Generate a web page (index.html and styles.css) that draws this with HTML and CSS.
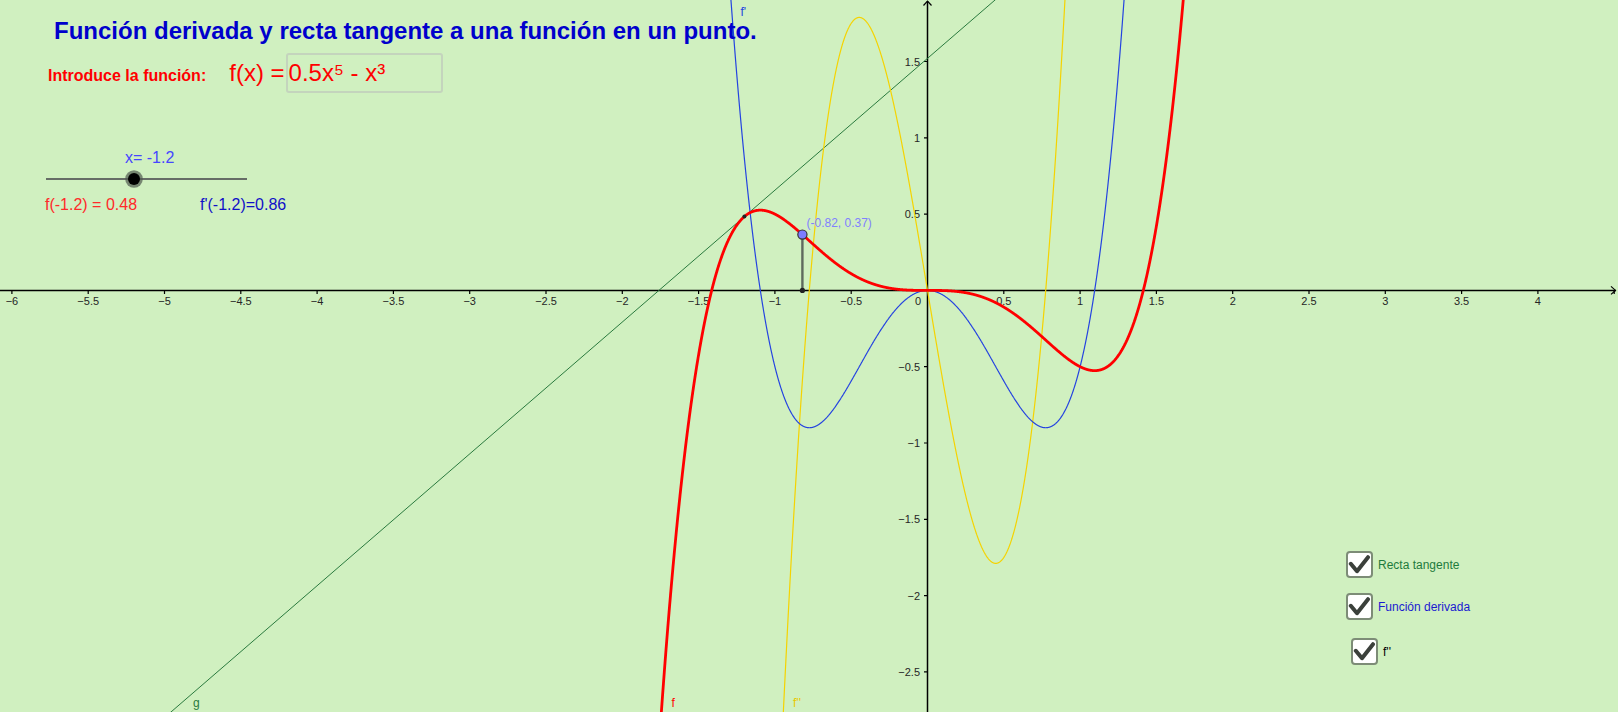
FILE: index.html
```html
<!DOCTYPE html>
<html lang="es">
<head>
<meta charset="utf-8">
<title>Función derivada y recta tangente</title>
<link rel="stylesheet" href="styles.css">
</head>
<body>
<div class="applet">
  <svg class="graph" width="1618" height="712" viewBox="0 0 1618 712">
    <g class="axes">
      <line class="axis" x1="0" y1="290.4" x2="1616" y2="290.4"/>
      <polyline class="arrow" points="1611,286.4 1615.5,290.4 1611,294.4"/>
      <line class="axis" x1="927.5" y1="712" x2="927.5" y2="1"/>
      <polyline class="arrow" points="923.5,5.5 927.5,1.2 931.5,5.5"/>
      <g transform="translate(927.5 290.4)">
        <path class="tick" d="M-915.6 0v3.5M-839.3 0v3.5M-763 0v3.5M-686.7 0v3.5M-610.4 0v3.5M-534.1 0v3.5M-457.8 0v3.5M-381.5 0v3.5M-305.2 0v3.5M-228.9 0v3.5M-152.6 0v3.5M-76.3 0v3.5M76.3 0v3.5M152.6 0v3.5M228.9 0v3.5M305.2 0v3.5M381.5 0v3.5M457.8 0v3.5M534.1 0v3.5M610.4 0v3.5M686.7 0v3.5"/>
        <path class="tick" d="M0 -228.9h-3.5M0 -152.6h-3.5M0 -76.3h-3.5M0 76.3h-3.5M0 152.6h-3.5M0 228.9h-3.5M0 305.2h-3.5M0 381.5h-3.5"/>
        <g class="xlab">
          <text x="-915.6" y="14.6">−6</text>
          <text x="-839.3" y="14.6">−5.5</text>
          <text x="-763" y="14.6">−5</text>
          <text x="-686.7" y="14.6">−4.5</text>
          <text x="-610.4" y="14.6">−4</text>
          <text x="-534.1" y="14.6">−3.5</text>
          <text x="-457.8" y="14.6">−3</text>
          <text x="-381.5" y="14.6">−2.5</text>
          <text x="-305.2" y="14.6">−2</text>
          <text x="-228.9" y="14.6">−1.5</text>
          <text x="-152.6" y="14.6">−1</text>
          <text x="-76.3" y="14.6">−0.5</text>
          <text x="76.3" y="14.6">0.5</text>
          <text x="152.6" y="14.6">1</text>
          <text x="228.9" y="14.6">1.5</text>
          <text x="305.2" y="14.6">2</text>
          <text x="381.5" y="14.6">2.5</text>
          <text x="457.8" y="14.6">3</text>
          <text x="534.1" y="14.6">3.5</text>
          <text x="610.4" y="14.6">4</text>
        </g>
        <g class="ylab">
          <text x="-6.5" y="14.6">0</text>
          <text x="-7.5" y="-224.9">1.5</text>
          <text x="-7.5" y="-148.6">1</text>
          <text x="-7.5" y="-72.3">0.5</text>
          <text x="-7.5" y="80.3">−0.5</text>
          <text x="-7.5" y="156.6">−1</text>
          <text x="-7.5" y="232.9">−1.5</text>
          <text x="-7.5" y="309.2">−2</text>
          <text x="-7.5" y="385.5">−2.5</text>
        </g>
      </g>
    </g>
    <path id="curve-g" class="curve curve-g" d=""/>
    <path id="curve-d2" class="curve curve-d2" d=""/>
    <path id="curve-d1" class="curve curve-d1" d=""/>
    <path id="curve-f" class="curve curve-f" d=""/>
    <line class="drop" x1="802.4" y1="234.6" x2="802.4" y2="290.4"/>
    <circle class="foot" cx="802.4" cy="290.4" r="2.6"/>
    <circle class="tpoint" cx="744.4" cy="216.6" r="2"/>
    <circle class="apoint" cx="802.4" cy="234.6" r="4.6"/>
    <text class="plabel" x="806.5" y="226.5">(-0.82, 0.37)</text>
    <text class="clabel clabel-d1" x="740.5" y="15.5">f'</text>
    <text class="clabel clabel-g" x="193" y="706.5">g</text>
    <text class="clabel clabel-f" x="671.5" y="706.5">f</text>
    <text class="clabel clabel-d2" x="793" y="706.5">f''</text>
  </svg>

  <header class="head">
    <h1 class="title">Función derivada y recta tangente a una función en un punto.</h1>
    <div class="input-row">
      <span class="prompt">Introduce la función:</span>
      <span class="fx">f(x) =</span>
      <span class="fbox">0.5x⁵ - x³</span>
    </div>
  </header>

  <section class="slider-panel">
    <div class="slider-label">x= -1.2</div>
    <div class="slider">
      <span class="track"></span>
      <span class="knob"></span>
    </div>
    <div class="values">
      <span class="fval">f(-1.2) = 0.48</span>
      <span class="dval">f'(-1.2)=0.86</span>
    </div>
  </section>

  <ul class="checks">
    <li class="check">
      <span class="box"><svg width="23" height="23" viewBox="0 0 23 23"><path d="M2.8 10.8 L9 18.2 L20 4.2"/></svg></span>
      <span class="check-label label-green">Recta tangente</span>
    </li>
    <li class="check">
      <span class="box"><svg width="23" height="23" viewBox="0 0 23 23"><path d="M2.8 10.8 L9 18.2 L20 4.2"/></svg></span>
      <span class="check-label label-blue">Función derivada</span>
    </li>
    <li class="check check-third">
      <span class="box"><svg width="23" height="23" viewBox="0 0 23 23"><path d="M2.8 10.8 L9 18.2 L20 4.2"/></svg></span>
      <span class="check-label label-black">f''</span>
    </li>
  </ul>
</div>
<script src="script.js"></script>
</body>
</html>
```

FILE: styles.css
```css
* {
  box-sizing: border-box;
  margin: 0;
  padding: 0;
}

html, body {
  width: 1618px;
  height: 712px;
  overflow: hidden;
}

body {
  background: #d0f0c0;
  font-family: "Liberation Sans", Arial, sans-serif;
}

.applet {
  position: relative;
  width: 1618px;
  height: 712px;
}

.graph {
  position: absolute;
  left: 0;
  top: 0;
  display: block;
}

.axis {
  stroke: #000;
  stroke-width: 1.5;
}

.arrow {
  fill: none;
  stroke: #000;
  stroke-width: 1.2;
}

.tick {
  stroke: #000;
  stroke-width: 1.2;
}

.xlab text,
.ylab text {
  font-family: "Liberation Sans", Arial, sans-serif;
  font-size: 11px;
  fill: #262626;
}

.xlab text {
  text-anchor: middle;
}

.ylab text {
  text-anchor: end;
}

.curve {
  fill: none;
  stroke-linejoin: round;
}

.curve-f {
  stroke: #ff0000;
  stroke-width: 2.8;
}

.curve-d1 {
  stroke: #2443e0;
  stroke-width: 1.2;
}

.curve-d2 {
  stroke: #f5d300;
  stroke-width: 1.2;
}

.curve-g {
  stroke: #2a7a3e;
  stroke-width: 1;
}

.drop {
  stroke: #5e6a5e;
  stroke-width: 2.4;
}

.foot {
  fill: #222;
}

.tpoint {
  fill: #222;
}

.apoint {
  fill: #7c7cff;
  stroke: #333;
  stroke-width: 1.2;
}

.plabel {
  font-family: "Liberation Sans", Arial, sans-serif;
  font-size: 12px;
  fill: #8080ff;
}

.clabel {
  font-family: "Liberation Sans", Arial, sans-serif;
  font-size: 12px;
}

.clabel-d1 { fill: #2443e0; }
.clabel-g { fill: #2a7a3e; }
.clabel-f { fill: #ff0000; }
.clabel-d2 { fill: #e8c800; }

/* header */
.head {
  position: absolute;
  left: 48px;
  top: 17px;
  display: flex;
  flex-direction: column;
  gap: 8px;
}

.title {
  font-size: 24px;
  line-height: 28px;
  font-weight: bold;
  color: #0000cc;
  padding-left: 6px;
  white-space: nowrap;
}

.input-row {
  display: flex;
  align-items: baseline;
}

.prompt {
  font-size: 16px;
  font-weight: bold;
  color: #ff0000;
  white-space: nowrap;
}

.fx {
  font-size: 24px;
  color: #ff0000;
  margin-left: 23px;
  margin-right: 1px;
  white-space: nowrap;
}

.fbox {
  width: 157px;
  height: 40px;
  border: 2px solid #c4d4bd;
  border-radius: 3px;
  font-size: 24px;
  line-height: 36px;
  padding-left: 1px;
  color: #ff0000;
  white-space: nowrap;
}

/* slider */
.slider-panel {
  position: absolute;
  left: 44px;
  top: 148px;
  display: flex;
  flex-direction: column;
}

.slider-label {
  font-size: 16px;
  line-height: 20px;
  color: #4646ff;
  padding-left: 81px;
}

.slider {
  position: relative;
  width: 201px;
  height: 16px;
  margin: 3px 0 0 2px;
  display: flex;
  align-items: center;
}

.track {
  display: block;
  width: 100%;
  height: 1.5px;
  background: #666d66;
}

.knob {
  position: absolute;
  left: 82px;
  top: 2px;
  width: 12px;
  height: 12px;
  border-radius: 50%;
  background: #000;
  box-shadow: 0 0 0 2.8px rgba(80, 88, 80, 0.7);
}

.values {
  display: flex;
  margin-top: 8px;
  font-size: 16px;
  line-height: 20px;
}

.fval {
  width: 156px;
  padding-left: 1px;
  color: #ff2a2a;
}

.dval {
  color: #1010c8;
}

/* checkboxes */
.checks {
  position: absolute;
  left: 1346px;
  top: 551px;
  list-style: none;
  display: flex;
  flex-direction: column;
  gap: 15px;
}

.check {
  display: flex;
  align-items: center;
  gap: 5px;
  font-size: 12px;
}

.check-third {
  margin-top: 3px;
  margin-left: 5px;
}

.box {
  width: 27px;
  height: 27px;
  border: 2px solid #7d8c77;
  border-radius: 4px;
  background: #fff;
  display: flex;
  align-items: center;
  justify-content: center;
}

.box svg {
  display: block;
}

.box path {
  fill: none;
  stroke: #3b403b;
  stroke-width: 4;
  stroke-linecap: round;
  stroke-linejoin: round;
}

.label-green { color: #1e7b3c; }
.label-blue { color: #1a1ad0; }
.label-black { color: #000; }
```

FILE: script.js
```js
(function () {
  var OX = 927.5, OY = 290.4, S = 152.6;

  function sx(u) { return OX + S * u; }
  function sy(v, clamp) {
    var y = OY - S * v;
    if (clamp) {
      if (y < -60) y = -60;
      if (y > 780) y = 780;
    }
    return y;
  }

  function plot(fn, x0, x1, n, clamp) {
    var d = '';
    for (var i = 0; i <= n; i++) {
      var u = x0 + (x1 - x0) * i / n;
      d += (i === 0 ? 'M' : 'L') + sx(u).toFixed(2) + ' ' + sy(fn(u), clamp).toFixed(2);
    }
    return d;
  }

  var a = -1.2;
  function f(x) { return 0.5 * Math.pow(x, 5) - Math.pow(x, 3); }
  function d1(x) { return 2.5 * Math.pow(x, 4) - 3 * x * x; }
  function d2(x) { return 10 * Math.pow(x, 3) - 6 * x; }
  var m = d1(a), fa = f(a);
  function g(x) { return m * (x - a) + fa; }

  document.getElementById('curve-f').setAttribute('d', plot(f, -2.2, 2.2, 4000, true));
  document.getElementById('curve-d1').setAttribute('d', plot(d1, -2.2, 2.2, 4000, true));
  document.getElementById('curve-d2').setAttribute('d', plot(d2, -2.2, 2.2, 4000, true));
  document.getElementById('curve-g').setAttribute('d', plot(g, -6.2, 4.7, 1, false));
})();
```
